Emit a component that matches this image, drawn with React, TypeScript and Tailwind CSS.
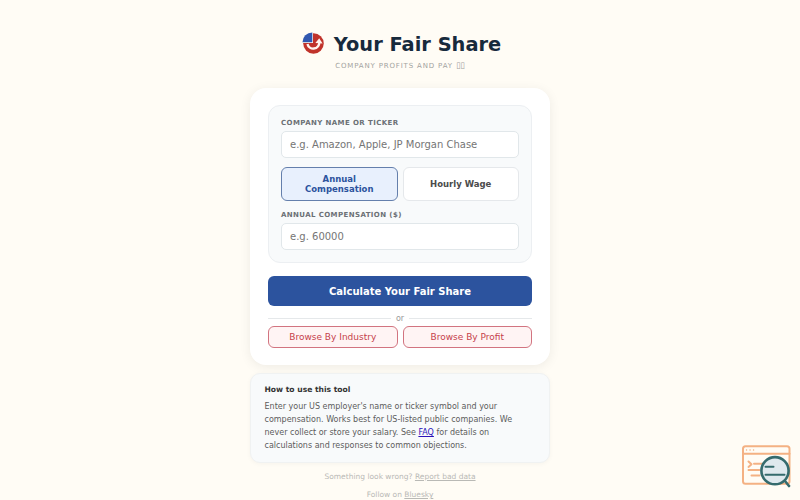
import { useState } from "react";
import clsx from "clsx";

const Logo = () => (
    <svg className="w-[22px] h-[22px] shrink-0 mb-[2px]" viewBox="0 0 46 46">
        <circle cx="24" cy="24" r="21.500" fill="#c0332b" />
        <path d="M23 23V0H0v23Z" fill="#fffcf5" />
        <path d="M21.500 21.500V1A20.500 20.500 0 0 0 1 21.500Z" fill="#3158b0" />
        <path
            d="M11.500 25c3 14 24 13 25-4"
            fill="none"
            stroke="#fff4ee"
            strokeWidth="5"
        />
        <path d="M28 23 36 13l7 11Z" fill="#fff4ee" />
    </svg>
);

const SearchBadge = () => (
    <svg
        className="fixed left-[741px] top-[444px] w-[51px] h-[46px]"
        viewBox="0 0 51 46"
        fill="none"
        strokeLinecap="round"
        strokeLinejoin="round"
    >
        <g stroke="#f4b183" strokeWidth="2">
            <rect x="2" y="2.200" width="46.500" height="37.500" rx="2.500" />
            <path d="M2 9.700h46.500M7.500 17.500l3 2.700-3 2.700M13 19.700h8M7.500 26h11M10.500 31.500h8" />
            <path d="M5.500 6h.1M9 6h.1M12.500 6h.1" strokeWidth="1.400" />
        </g>
        <g stroke="#356b6d">
            <circle cx="34" cy="26.700" r="13.600" fill="#dfe9ee" strokeWidth="2.600" />
            <path d="M24.500 22.800h8M24.500 30.800h19" strokeWidth="2" />
            <path d="M44 37l4 5" strokeWidth="2.600" />
        </g>
    </svg>
);

type FieldProps = {
    label: string;
    placeholder: string;
};

const Field = ({ label, placeholder }: FieldProps) => (
    <label className="block">
        <span className="block h-[9px] mb-[3px] text-[7px] leading-[9px] font-bold tracking-[0.4px] uppercase text-[#6b7075]">
            {label}
        </span>
        <input
            className="block w-full h-[27px] px-[8px] rounded-[5px] border border-[#e1e7ea] bg-white text-[10px] text-gray-800 placeholder:text-[#757575] outline-none"
            placeholder={placeholder}
        />
    </label>
);

const modes = ["Annual Compensation", "Hourly Wage"];
const browseLinks = ["Browse By Industry", "Browse By Profit"];

export default function App() {
    const [mode, setMode] = useState(modes[0]);

    return (
        <div className="h-screen overflow-hidden bg-[#fffcf5] font-['DejaVu_Sans',sans-serif]">
            <main className="w-[300px] mx-auto pt-[31px]">
                <header className="h-[57px]">
                    <div className="flex items-center justify-center gap-[10px] h-[26px] pl-[3px]">
                        <Logo />
                        <h1 className="pt-px text-[19.400px] leading-[26px] font-bold whitespace-nowrap text-[#172a3c]">
                            Your Fair Share
                        </h1>
                    </div>
                    <p className="mt-[3px] text-center text-[7px] leading-[10px] tracking-[0.84px] uppercase text-[#a3a3a0]">
                        Company profits and pay{" "}
                        <span className="text-[8.500px] tracking-[-0.3px]">▯▯</span>
                    </p>
                </header>

                <section className="h-[277px] px-[18px] pt-[17px] rounded-[16px] bg-white shadow-[0_2px_12px_rgba(0,0,0,0.07)]">
                    <div className="h-[158px] px-[12px] pt-[13px] rounded-[12px] border border-[#eceff2] bg-[#f8fafb]">
                        <Field
                            label="Company name or ticker"
                            placeholder="e.g. Amazon, Apple, JP Morgan Chase"
                        />
                        <div className="grid grid-cols-2 gap-[5px] mt-[9px] mb-[10px]">
                            {modes.map((m) => (
                                <button
                                    key={m}
                                    type="button"
                                    onClick={() => setMode(m)}
                                    className={clsx(
                                        "h-[34px] px-[20px] rounded-[6px] border text-[8.500px] leading-[10px] font-bold",
                                        m === mode
                                            ? "border-[#647fac] bg-[#e8f0fd] text-[#2c539e]"
                                            : "border-[#e5e8eb] bg-white text-[#4b4b4b]",
                                    )}
                                >
                                    {m}
                                </button>
                            ))}
                        </div>
                        <Field label="Annual compensation ($)" placeholder="e.g. 60000" />
                    </div>

                    <button
                        type="button"
                        className="block w-full h-[30px] mt-[13px] rounded-[6px] bg-[#2c539e] text-[10px] font-bold text-white"
                    >
                        Calculate Your Fair Share
                    </button>
                    <div className="flex items-center gap-[5px] h-[13px] mt-[6px] mb-[1px] text-[8px] text-[#999]">
                        <span className="flex-1 h-px bg-[#e5e8ea]" />
                        or
                        <span className="flex-1 h-px bg-[#e5e8ea]" />
                    </div>
                    <div className="grid grid-cols-2 gap-[5px]">
                        {browseLinks.map((b) => (
                            <button
                                key={b}
                                type="button"
                                className="h-[22px] pt-px rounded-[6px] border border-[#d27480] bg-[#fff4f4] text-[9px] text-[#c63f4b]"
                            >
                                {b}
                            </button>
                        ))}
                    </div>
                </section>

                <section className="h-[90px] mt-[8px] px-[13.500px] pt-[10px] rounded-[10px] border border-[#f0f2f2] bg-[#f8fafb] shadow-[0_1px_5px_rgba(0,0,0,0.04)]">
                    <h2 className="text-[7.600px] leading-[12px] font-bold text-[#333]">
                        How to use this tool
                    </h2>
                    <p className="mt-[5px] text-[8px] leading-[12.900px] text-[#5c5c5c]">
                        Enter your US employer's name or ticker symbol and your
                        compensation. Works best for US-listed public companies. We
                        never collect or store your salary. See{" "}
                        <a href="#faq" className="underline text-[#2a13b8]">
                            FAQ
                        </a>{" "}
                        for details on calculations and responses to common objections.
                    </p>
                </section>

                <footer className="pt-[8px] text-center text-[7.500px] text-[#b9b9b5]">
                    <p className="leading-[12px]">
                        Something look wrong?{" "}
                        <a href="#report" className="underline">
                            Report bad data
                        </a>
                    </p>
                    <p className="mt-[6px] leading-[12px]">
                        Follow on{" "}
                        <a href="#bluesky" className="underline">
                            Bluesky
                        </a>
                    </p>
                </footer>
            </main>
            <SearchBadge />
        </div>
    );
}
